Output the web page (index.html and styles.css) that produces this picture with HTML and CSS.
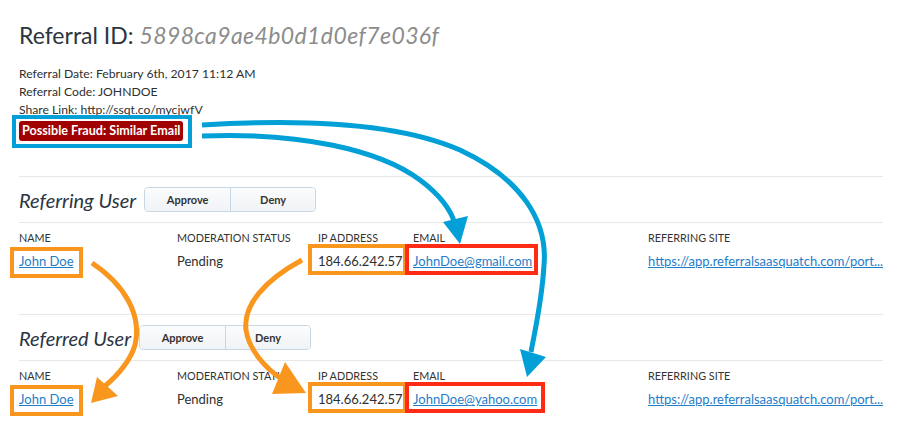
FILE: index.html
```html
<!DOCTYPE html>
<html lang="en">

<head>
    <meta charset="UTF-8">
    <title>Referral</title>
    <link rel="stylesheet" href="styles.css">
</head>

<body>
    <div class="page">
        <h1 class="title">Referral ID: <em>5898ca9ae4b0d1d0ef7e036f</em></h1>

        <div class="meta">
            <p>Referral Date: February 6th, 2017 11:12 AM</p>
            <p>Referral Code: JOHNDOE</p>
            <p>Share Link: <span>http://ssqt.co/mycjwfV</span></p>
        </div>

        <span class="badge mark mark-blue">Possible Fraud: Similar Email</span>

        <section class="user">
            <div class="user-head">
                <h2>Referring User</h2>
                <div class="btn-group">
                    <button>Approve</button>
                    <button>Deny</button>
                </div>
            </div>
            <div class="user-table">
                <span class="th">Name</span>
                <span class="th">Moderation Status</span>
                <span class="th">IP Address</span>
                <span class="th">Email</span>
                <span class="th">Referring Site</span>

                <span class="td"><a href="#" class="mark mark-name">John Doe</a></span>
                <span class="td">Pending</span>
                <span class="td"><span class="mark mark-ip">184.66.242.57</span></span>
                <span class="td"><a href="#" class="mark mark-email">JohnDoe@gmail.com</a></span>
                <span class="td"><a href="#">https://app.referralsaasquatch.com/port...</a></span>
            </div>
        </section>

        <section class="user">
            <div class="user-head">
                <h2>Referred User</h2>
                <div class="btn-group">
                    <button>Approve</button>
                    <button>Deny</button>
                </div>
            </div>
            <div class="user-table">
                <span class="th">Name</span>
                <span class="th">Moderation Status</span>
                <span class="th">IP Address</span>
                <span class="th">Email</span>
                <span class="th">Referring Site</span>

                <span class="td"><a href="#" class="mark mark-name">John Doe</a></span>
                <span class="td">Pending</span>
                <span class="td"><span class="mark mark-ip">184.66.242.57</span></span>
                <span class="td"><a href="#" class="mark mark-email wide">JohnDoe@yahoo.com</a></span>
                <span class="td"><a href="#">https://app.referralsaasquatch.com/port...</a></span>
            </div>
        </section>

        <!-- annotation arrows -->
        <svg class="arrows" viewBox="0 0 901 438">
            <g fill="none" stroke-width="5" stroke-linecap="butt">
                <path stroke="#02a0d6" d="M202,125 C330,117 410,128 460,150 C520,178 548,220 544,265 C542,300 536,325 531,352" />
                <path stroke="#02a0d6" d="M202,136 C300,132 380,150 420,180 C440,195 451,210 455,224" />
                <path stroke="#f8961e" d="M92,263 C125,285 142,315 135,345 C130,362 118,375 104,387" />
                <path stroke="#f8961e" d="M302,260 C265,280 243,305 246,330 C249,350 265,368 283,380" />
            </g>
            <polygon fill="#02a0d6" points="520,349 546,357 527,377" />
            <polygon fill="#02a0d6" points="443,222 468,216 460,244" />
            <polygon fill="#f8961e" points="97,377 118,396 91,403" />
            <polygon fill="#f8961e" points="285,362 306,393 272,394" />
        </svg>
    </div>
</body>

</html>
```

FILE: styles.css
```css
* {
    margin: 0;
    padding: 0;
    box-sizing: border-box;
}

body {
    font-family: Lato, "Open Sans", sans-serif;
    color: #2f2f2f;
    background: #fff;
}

.page {
    position: relative;
    width: 901px;
    height: 438px;
    padding: 21px 18px 0 19px;
    overflow: hidden;
}

.title {
    font-size: 23px;
    font-weight: 400;
    line-height: 28px;
    color: #2b3540;
}

.title em {
    color: #8c8c8c;
    letter-spacing: 0.4px;
}

.meta {
    margin-top: 16px;
    font-size: 12.2px;
    line-height: 18px;
}

.badge {
    display: inline-block;
    margin-top: 1px;
    padding: 0 3px;
    height: 20px;
    line-height: 20px;
    font-size: 12.6px;
    font-weight: 700;
    color: #fff;
    background: #a10000;
    border-radius: 3px;
}

.user {
    border-top: 1px solid #e8e8e8;
}

.user:first-of-type {
    margin-top: 35px;
}

.user-head {
    display: flex;
    align-items: center;
    gap: 8px;
    padding: 10px 0;
    border-bottom: 1px solid #e8e8e8;
}

.user-head h2 {
    font-size: 20px;
    font-weight: 400;
    font-style: italic;
    color: #2b3540;
}

.btn-group {
    display: flex;
    height: 25px;
    border: 1px solid #c9d6e3;
    border-radius: 4px;
    overflow: hidden;
}

.btn-group button {
    width: 85px;
    font-family: inherit;
    font-size: 11px;
    font-weight: 700;
    color: #333;
    border: none;
    background: linear-gradient(#fbfcfd, #f0f3f6);
}

.btn-group button + button {
    border-left: 1px solid #c9d6e3;
}

.user-table {
    display: grid;
    grid-template-columns: 158px 141px 95px 235px 1fr;
    row-gap: 7px;
    padding: 8px 0 44px;
}

.th {
    font-size: 10.8px;
    line-height: 14px;
    text-transform: uppercase;
    color: #333;
}

.td {
    font-size: 13px;
    line-height: 18px;
}

.td a {
    color: #1f7dca;
}

/* annotation boxes */
.mark {
    position: relative;
    display: inline-block;
}

.mark::after {
    content: '';
    position: absolute;
    border: 4px solid;
}

.mark-blue::after {
    top: -6px;
    bottom: -7px;
    left: -7px;
    right: -9px;
    border-color: #02a0d6;
}

.mark-name::after {
    top: -5px;
    bottom: -8px;
    left: -9px;
    right: -9px;
    border-color: #f8961e;
}

.mark-ip::after {
    top: -8px;
    bottom: -5px;
    left: -10px;
    right: -4px;
    border-color: #f8961e;
}

.mark-email::after {
    top: -8px;
    bottom: -5px;
    left: -8px;
    right: -6px;
    border-color: #ff2b14;
}

.mark-email.wide::after {
    right: -8px;
}

.arrows {
    position: absolute;
    top: 0;
    left: 0;
    width: 901px;
    height: 438px;
    pointer-events: none;
}
```
